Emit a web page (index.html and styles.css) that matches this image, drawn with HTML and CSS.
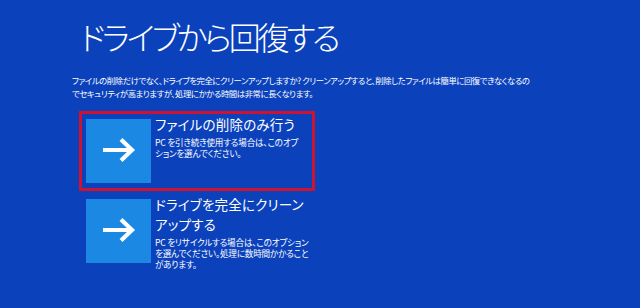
FILE: index.html
```html
<!DOCTYPE html>
<html lang="ja">
<head>
  <meta charset="UTF-8">
  <meta name="viewport" content="width=device-width, initial-scale=1.0">
  <title>ドライブから回復する</title>
  <link rel="stylesheet" href="styles.css">
</head>
<body>

  <main class="recovery">
    <!-- Heading -->
    <h1 class="recovery-title">ドライブから回復する</h1>

    <p class="recovery-lead">
      ファイルの削除だけでなく、ドライブを完全にクリーンアップしますか? クリーンアップすると、削除したファイルは簡単に回復できなくなるの<br>
      でセキュリティが高まりますが、処理にかかる時間は非常に長くなります。
    </p>

    <!-- Options -->
    <div class="options">
      <div class="option selected">
        <div class="option-tile">
          <svg width="65" height="64" viewBox="0 0 65 64">
            <path d="M17 31 H45 M35 20.5 L46 31 L35 41.5" fill="none" stroke="#fff" stroke-width="4.2"/>
          </svg>
        </div>
        <div class="option-text">
          <h2 class="option-name">ファイルの削除のみ行う</h2>
          <p class="option-desc">PC を引き続き使用する場合は、このオプ<br>ションを選んでください。</p>
        </div>
      </div>

      <div class="option">
        <div class="option-tile">
          <svg width="65" height="64" viewBox="0 0 65 64">
            <path d="M17 31 H45 M35 20.5 L46 31 L35 41.5" fill="none" stroke="#fff" stroke-width="4.2"/>
          </svg>
        </div>
        <div class="option-text">
          <h2 class="option-name">ドライブを完全にクリーン<br>アップする</h2>
          <p class="option-desc">PC をリサイクルする場合は、このオプション<br>を選んでください。処理に数時間かかること<br>があります。</p>
        </div>
      </div>
    </div>
  </main>

</body>
</html>
```

FILE: styles.css
```css
/* General Styles */
body {
  margin: 0;
  min-height: 100vh;
  background-color: #0b42bc;
  color: #ffffff;
  font-family: "Noto Sans CJK JP", "Noto Sans", sans-serif;
  font-feature-settings: "palt";
  overflow: hidden;
}

/* Page */
.recovery {
  padding: 14px 0 0 72px;
}

.recovery-title {
  margin: 0 0 0 8px;
  font-size: 32px;
  font-weight: 300;
  line-height: 44px;
  letter-spacing: -3.2px;
}

.recovery-lead {
  margin: 16px 0 12px;
  font-size: 8.4px;
  line-height: 12.5px;
  letter-spacing: -0.45px;
}

/* Option list */
.options {
  display: flex;
  flex-direction: column;
  margin-left: 7px;
}

.option {
  display: flex;
  align-items: flex-start;
  gap: 4px;
  width: 222px;
  height: 64px;
  padding: 5px 4px;
  border: 3px solid transparent;
}

.option.selected {
  border-color: #cf1230;
}

.option-tile {
  flex: none;
  width: 65px;
  height: 64px;
  background: #1b89e4;
}

.option-tile svg {
  display: block;
}

.option-text {
  flex: 1;
}

.option-name {
  margin: -4px 0 0;
  font-size: 13.5px;
  font-weight: 400;
  line-height: 19.5px;
  letter-spacing: 0.2px;
  white-space: nowrap;
}

.option-desc {
  margin: 2.5px 0 0;
  font-size: 8.6px;
  line-height: 11px;
  letter-spacing: -0.2px;
  white-space: nowrap;
}
```
